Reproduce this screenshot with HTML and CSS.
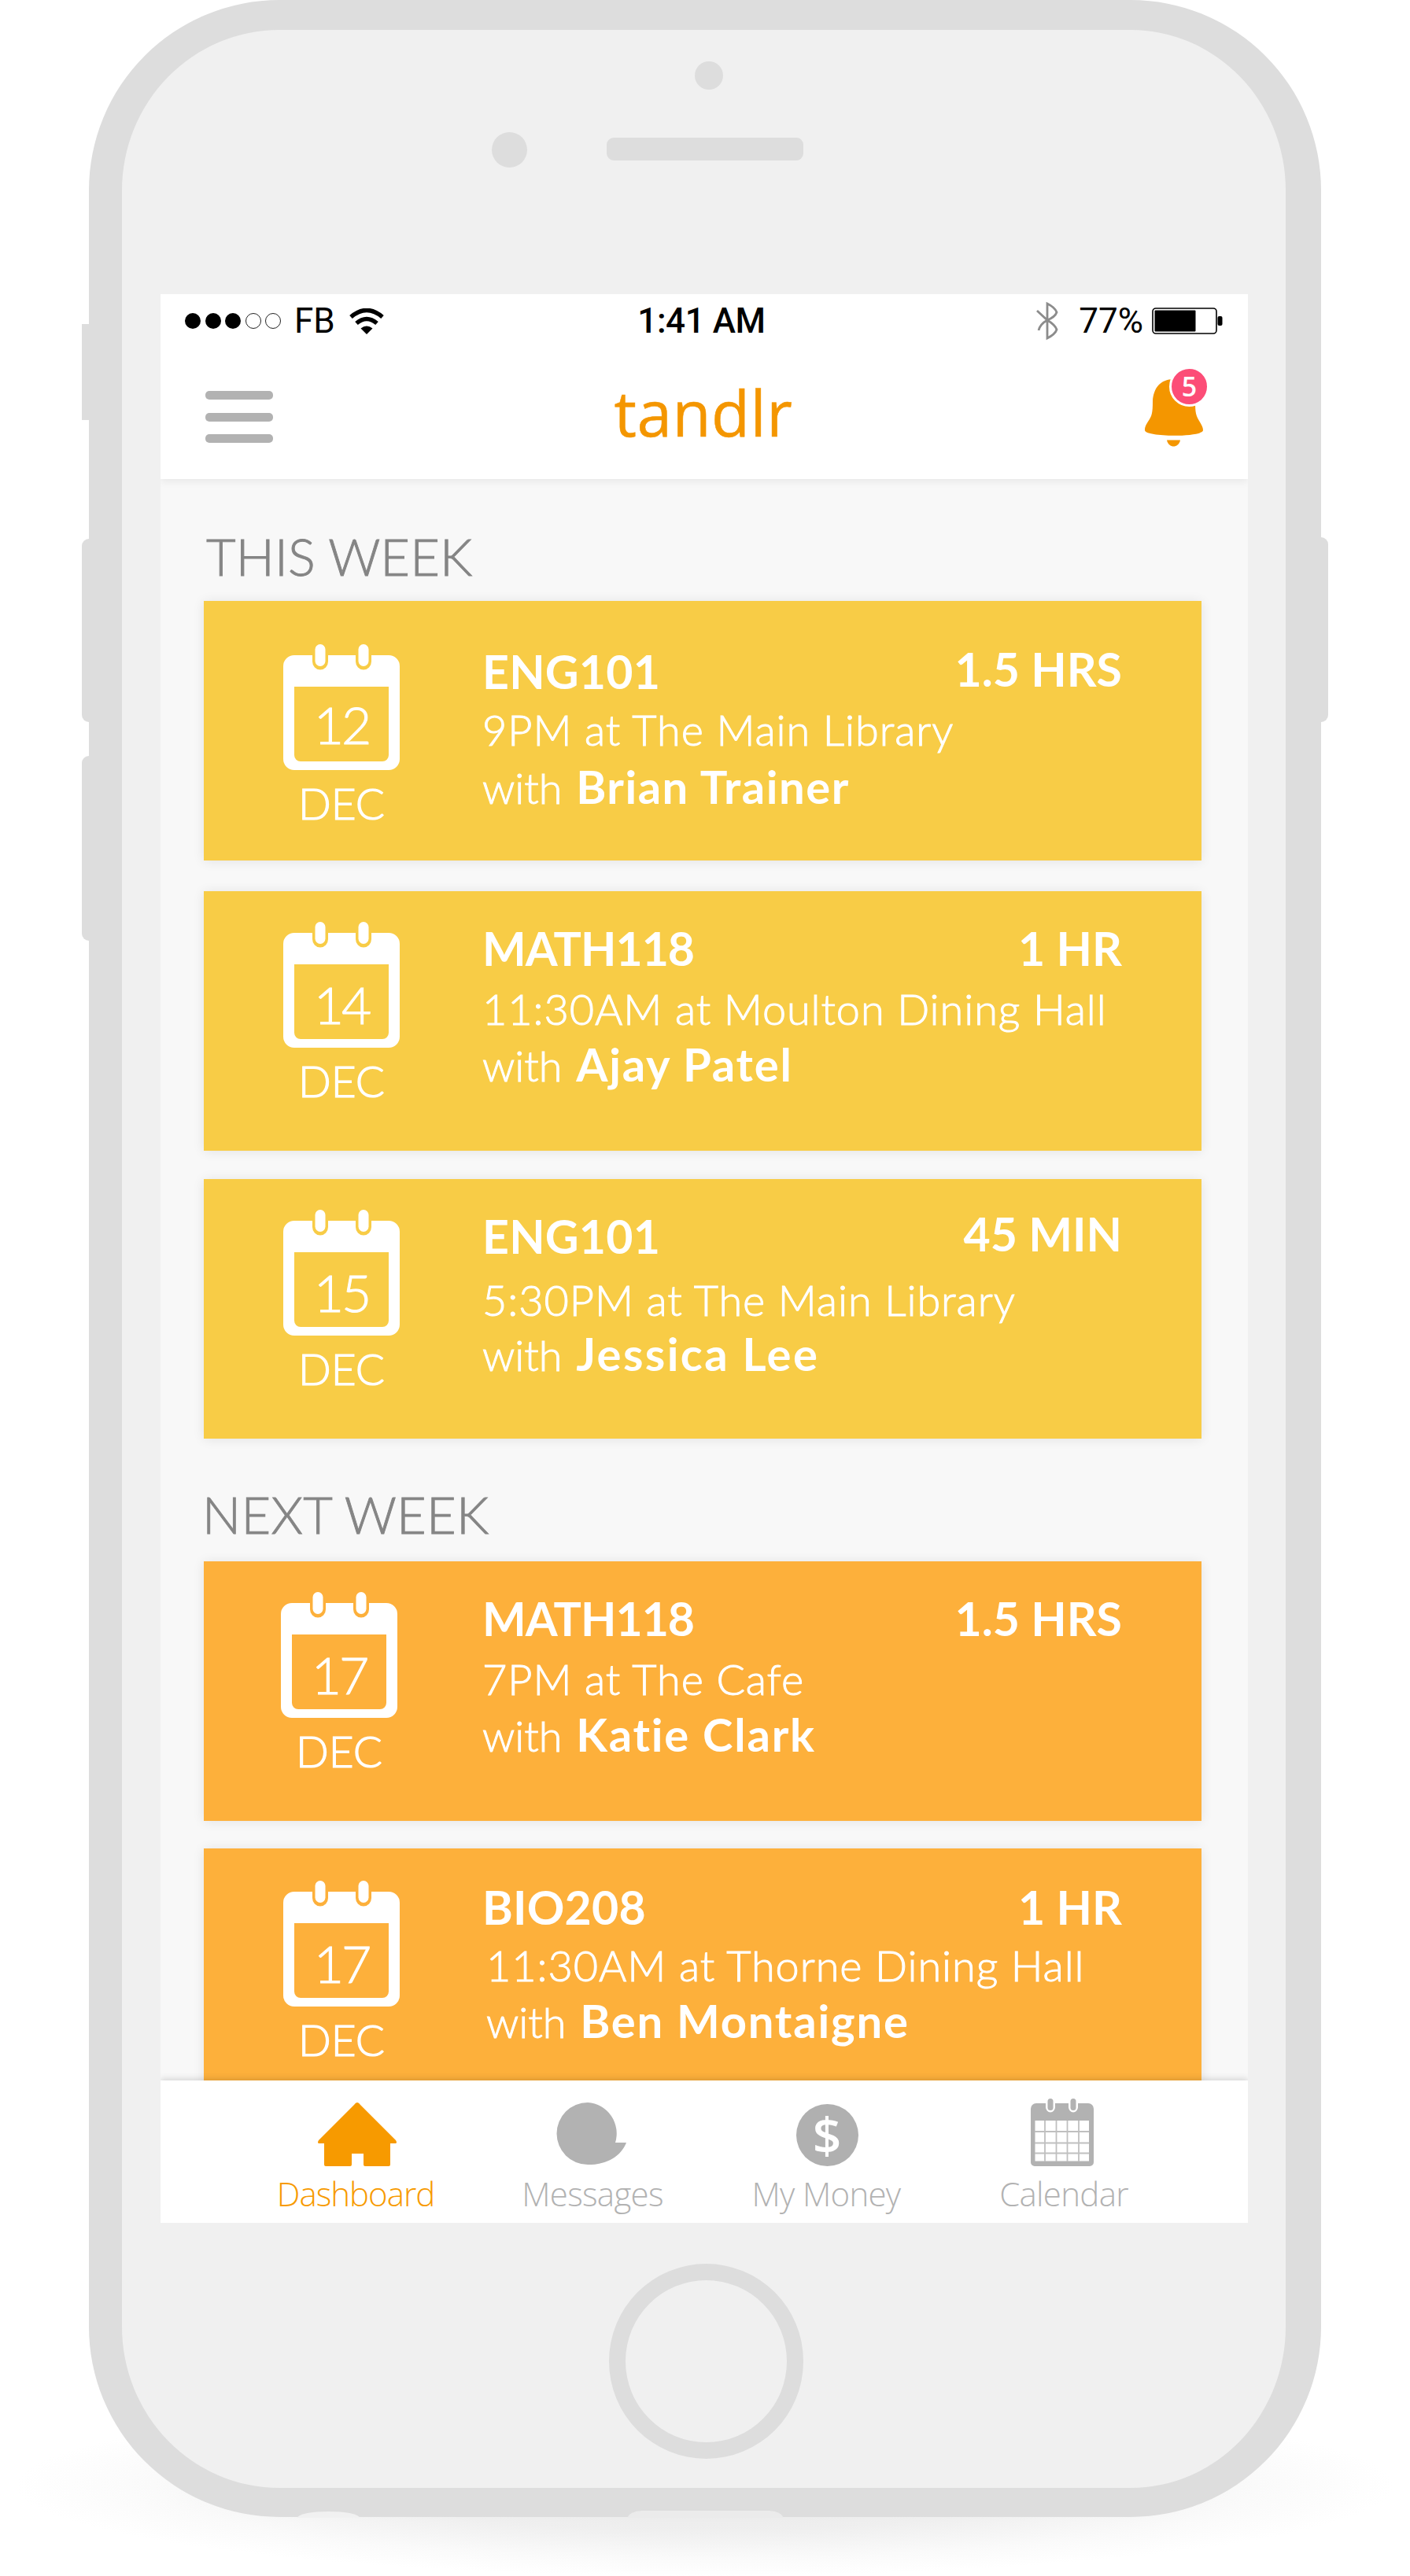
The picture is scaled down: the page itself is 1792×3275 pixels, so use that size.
FILE: index.html
```html
<!DOCTYPE html>
<html lang="en">
<head>
  <meta charset="UTF-8">
  <meta name="viewport" content="width=device-width, initial-scale=1.0">
  <title>tandlr</title>
  <link rel="stylesheet" href="styles.css">
</head>
<body>

  <!-- shapes used more than once -->
  <svg class="sprite" width="0" height="0">
    <symbol id="cal" viewBox="0 0 148 160">
      <path fill="#fff" fill-rule="evenodd" d="M14 14H37V22a10 10.500 0 0 0 20 0V14H92V22a10 10.500 0 0 0 20 0V14H134a14 14 0 0 1 14 14V146a14 14 0 0 1-14 14H14a14 14 0 0 1-14-14V28A14 14 0 0 1 14 14ZM14 54V141a8 8 0 0 0 8 8H126a8 8 0 0 0 8-8V54Z"/>
      <rect x="40.500" y="0" width="13" height="28" rx="6.500" fill="#fff"/>
      <rect x="95.500" y="0" width="13" height="28" rx="6.500" fill="#fff"/>
    </symbol>
  </svg>

  <div class="stage">
    <div class="floor-shadow"></div>
    <div class="side-button mute"></div>
    <div class="side-button vol-up"></div>
    <div class="side-button vol-down"></div>
    <div class="side-button power"></div>

    <div class="phone">
      <div class="top-bezel">
        <div class="sensor"></div>
        <div class="camera"></div>
        <div class="speaker"></div>
      </div>

      <div class="screen">
        <header class="header">
          <div class="status">
            <div class="status-left">
              <div class="signal"><i></i><i></i><i></i><i class="off"></i><i class="off"></i></div>
              <span class="carrier">FB</span>
              <svg class="wifi" width="44" height="33" viewBox="0 0 44 33">
                <path d="M2 11Q22 -6 42 11" fill="none" stroke="#000" stroke-width="5.500"/>
                <path d="M9 19Q22 8 35 19" fill="none" stroke="#000" stroke-width="5.500"/>
                <path d="M14.500 25.500Q22 19.500 29.500 25.500L22 33Z"/>
              </svg>
            </div>
            <span class="time">1:41 AM</span>
            <div class="status-right">
              <svg width="28" height="50" viewBox="0 0 28 50">
                <path d="M1 12L14 24Q24 20 26 14Q24 8 14 3V47Q24 42 26 36Q24 30 14 24Q5 29 3 37" fill="none" stroke="#8c8c8c" stroke-width="2.800"/>
              </svg>
              <span class="percent">77%</span>
              <svg width="90" height="34" viewBox="0 0 90 34">
                <rect x="1" y="1" width="81" height="32" rx="4" fill="none" stroke="#000" stroke-width="1.600"/>
                <rect x="3.500" y="3.500" width="52" height="27" rx="1"/>
                <rect x="83.500" y="11" width="6" height="12" rx="2"/>
              </svg>
            </div>
          </div>
          <div class="nav">
            <div class="menu"><i></i><i></i><i></i></div>
            <h1 class="logo">tandlr</h1>
            <div class="alerts">
              <svg width="74" height="86" viewBox="0 0 74 86">
                <path fill="#f49600" d="M37 0C19 0 11 12 10 28C10 43 9 47 4 54C1 59 0 61 0 65C0 74 74 74 74 65C74 61 72 58 69 53C65 46 64 43 64 28C63 12 55 0 37 0Z"/>
                <path fill="#f49600" d="M28 77.500H45C44 83 40 85.500 36.500 85.500C33 85.500 29 83 28 77.500Z"/>
              </svg>
              <span class="badge">5</span>
            </div>
          </div>
        </header>

        <main class="content">
          <h2 class="week">THIS WEEK</h2>

          <article class="card first">
            <div class="date"><div class="cal"><svg width="148" height="160"><use href="#cal"/></svg><span>12</span></div><p>DEC</p></div>
            <div class="details">
              <div class="row"><h3>ENG101</h3><span class="length">1.5 HRS</span></div>
              <p class="place">9PM at The Main Library</p>
              <p class="tutor">with <b>Brian Trainer</b></p>
            </div>
          </article>

          <article class="card second">
            <div class="date"><div class="cal"><svg width="148" height="160"><use href="#cal"/></svg><span>14</span></div><p>DEC</p></div>
            <div class="details">
              <div class="row"><h3 class="math">MATH118</h3><span class="length">1 HR</span></div>
              <p class="place">11:30AM at Moulton Dining Hall</p>
              <p class="tutor">with <b>Ajay Patel</b></p>
            </div>
          </article>

          <article class="card third">
            <div class="date"><div class="cal"><svg width="148" height="160"><use href="#cal"/></svg><span>15</span></div><p>DEC</p></div>
            <div class="details">
              <div class="row"><h3>ENG101</h3><span class="length">45 MIN</span></div>
              <p class="place">5:30PM at The Main Library</p>
              <p class="tutor">with <b>Jessica Lee</b></p>
            </div>
          </article>

          <h2 class="week next">NEXT WEEK</h2>

          <article class="card orange fourth">
            <div class="date"><div class="cal"><svg width="148" height="160"><use href="#cal"/></svg><span>17</span></div><p>DEC</p></div>
            <div class="details">
              <div class="row"><h3 class="math">MATH118</h3><span class="length">1.5 HRS</span></div>
              <p class="place">7PM at The Cafe</p>
              <p class="tutor">with <b>Katie Clark</b></p>
            </div>
          </article>

          <article class="card orange fifth">
            <div class="date"><div class="cal"><svg width="148" height="160"><use href="#cal"/></svg><span>17</span></div><p>DEC</p></div>
            <div class="details">
              <div class="row"><h3>BIO208</h3><span class="length">1 HR</span></div>
              <p class="place">11:30AM at Thorne Dining Hall</p>
              <p class="tutor">with <b>Ben Montaigne</b></p>
            </div>
          </article>
        </main>

        <nav class="tabs">
          <a class="tab active">
            <svg width="100" height="88" viewBox="0 0 100 88">
              <path fill="#f79a00" d="M50 6Q52 6 54 9L99 54Q101 57 99 58H92V85Q92 87 90 87H60Q58 87 58 85V71H43V85Q43 87 41 87H10Q8 87 8 85V58H1Q-1 57 1 54L46 9Q48 6 50 6Z"/>
            </svg>
            Dashboard
          </a>
          <a class="tab messages">
            <svg width="90" height="88" viewBox="0 0 90 88">
              <path fill="#b2b2b2" d="M40 6a39.500 39.500 0 0 1 35 51H89C84 70 70 85 40 85a39.500 39.500 0 0 1 0-79Z"/>
            </svg>
            Messages
          </a>
          <a class="tab money">
            <span class="coin">$</span>
            My Money
          </a>
          <a class="tab calendar">
            <svg width="80" height="88" viewBox="0 0 80 88">
              <path fill="#b2b2b2" d="M7 7H19V12a6 6.500 0 0 0 12 0V7H48V12a6 6.500 0 0 0 12 0V7H73a7 7 0 0 1 7 7V82a5 5 0 0 1-5 5H5a5 5 0 0 1-5-5V14a7 7 0 0 1 7-7Z"/>
              <rect x="21.500" y="1" width="7" height="15" rx="3.500" fill="#b2b2b2"/>
              <rect x="50.500" y="1" width="7" height="15" rx="3.500" fill="#b2b2b2"/>
              <rect x="5.500" y="29" width="68.500" height="51.500" fill="#fff"/>
              <path d="M18 29V81M32.500 29V81M46.500 29V81M61 29V81M5 43H74M5 57.500H74M5 70.500H74" stroke="#c0c0c0" stroke-width="1.800"/>
            </svg>
            Calendar
          </a>
        </nav>
      </div>

      <div class="home-button"></div>
    </div>

    <div class="port jack"></div>
    <div class="port lightning"></div>
  </div>

</body>
</html>
```

FILE: styles.css
```css
* {
  box-sizing: border-box;
}
body {
  margin: 0;
  background-color: #fff;
  font-family: Lato, sans-serif;
}
h1, h2, h3, p {
  margin: 0;
}
.sprite {
  display: block;
}
.stage {
  position: relative;
  width: 1792px;
  height: 3275px;
  padding-left: 113px;
  overflow: hidden;
}

/* phone body */
.phone {
  position: relative;
  width: 1566px;
  height: 3200px;
  border: solid #ddd;
  border-width: 38px 45px 37px 42px;
  border-radius: 242px;
  background-color: #f0f0f0;
  display: flex;
  flex-direction: column;
}
.floor-shadow {
  position: absolute;
  left: 20px;
  bottom: 0;
  width: 1752px;
  height: 230px;
  background: radial-gradient(closest-side, #e6e6e6, #efefef 50%, #fafafa 80%, #fff);
}
.side-button {
  position: absolute;
  left: 104px;
  width: 30px;
  border-radius: 9px;
  background-color: #ddd;
}
.mute {
  top: 412px;
  height: 122px;
  border-radius: 0;
}
.vol-up {
  top: 685px;
  height: 233px;
}
.vol-down {
  top: 961px;
  height: 235px;
}
.power {
  left: 1658px;
  top: 683px;
  height: 235px;
}
.top-bezel {
  position: relative;
  height: 336px;
  flex: none;
}
.sensor, .camera, .speaker {
  position: absolute;
  background-color: #ddd;
  border-radius: 50%;
}
.sensor {
  left: 728px;
  top: 40px;
  width: 36px;
  height: 36px;
}
.camera {
  left: 470px;
  top: 130px;
  width: 45px;
  height: 45px;
}
.speaker {
  left: 616px;
  top: 137px;
  width: 250px;
  height: 29px;
  border-radius: 9px;
}
.home-button {
  width: 247px;
  height: 248px;
  margin: 52px 0 0 619px;
  border: 21px solid #ddd;
  border-radius: 50%;
}
.port {
  position: absolute;
  background-color: #f1f1f1;
}
.jack {
  left: 378px;
  top: 3193px;
  width: 79px;
  height: 8px;
  border-radius: 40px 40px 0 0 / 8px 8px 0 0;
}
.lightning {
  left: 798px;
  top: 3192px;
  width: 197px;
  height: 9px;
  border-radius: 18px 18px 0 0 / 9px 9px 0 0;
  background-color: #ebebeb;
}

/* app */
.screen {
  width: 1382px;
  height: 2452px;
  flex: none;
  margin-left: 49px;
  background-color: #f8f8f8;
  display: flex;
  flex-direction: column;
  overflow: hidden;
}
.header {
  position: relative;
  z-index: 1;
  height: 235px;
  flex: none;
  background-color: #fff;
  box-shadow: 0 3px 10px rgba(0, 0, 0, 0.07);
}
.status {
  height: 68px;
  padding: 0 32px 0 31px;
  display: grid;
  grid-template-columns: 1fr auto 1fr;
  align-items: center;
  font-family: Roboto, sans-serif;
  font-size: 44px;
  line-height: 68px;
}
.status-left, .status-right {
  display: flex;
  align-items: center;
}
.status-right {
  justify-content: flex-end;
}
.signal {
  display: flex;
  gap: 5.500px;
}
.signal i {
  width: 20px;
  height: 20px;
  border-radius: 50%;
  background-color: #000;
}
.signal .off {
  background-color: transparent;
  border: 1.500px solid #222;
}
.carrier {
  margin: 0 18px 0 17px;
}
.time {
  margin-left: -6px;
  font-weight: 500;
  letter-spacing: -0.4px;
}
.percent {
  margin: 0 11px 0 26px;
}
.nav {
  padding: 0 57px;
  display: flex;
  justify-content: space-between;
  align-items: flex-start;
}
.menu {
  width: 86px;
  padding-top: 55px;
  display: flex;
  flex-direction: column;
  gap: 16.500px;
}
.menu i {
  height: 11px;
  border-radius: 5px;
  background-color: #b2b2b2;
}
.logo {
  margin: 32px 0 0 -14px;
  font-family: "Open Sans", sans-serif;
  font-weight: 400;
  font-size: 80px;
  line-height: 100px;
  letter-spacing: 0.5px;
  color: #f49600;
  -webkit-text-stroke: 0.5px #f49600;
}
.alerts {
  position: relative;
  padding-top: 40px;
}
.badge {
  position: absolute;
  left: 31px;
  top: 24px;
  width: 51px;
  height: 51px;
  border: 3.500px solid #fff;
  border-radius: 50%;
  background-color: #fc4d77;
  color: #fff;
  font-family: "Open Sans", sans-serif;
  font-weight: 600;
  font-size: 34px;
  line-height: 44px;
  text-align: center;
}

.content {
  flex: 1;
  min-height: 0;
  padding: 0 59px 0 55px;
  overflow: hidden;
}
.week {
  padding: 58px 0 17px 3px;
  font-weight: 300;
  font-size: 65px;
  line-height: 80px;
  letter-spacing: 0.1px;
  color: #858585;
  -webkit-text-stroke: 0.9px #858585;
}
.next {
  padding: 56px 0 20px 0;
  margin-left: -2px;
  letter-spacing: 0.3px;
}
.card {
  height: 330px;
  padding: 37px 101px 0 101px;
  display: flex;
  background-color: #f8cc46;
  box-shadow: 0 1px 14px rgba(0, 0, 0, 0.09);
  color: #fff;
}
.orange {
  background-color: #fdb03b;
}
.date {
  width: 148px;
  padding-top: 2px;
  text-align: center;
}
.cal {
  position: relative;
  height: 160px;
}
.cal span {
  position: absolute;
  left: 0;
  top: 65px;
  width: 148px;
  font-weight: 300;
  font-size: 66px;
  line-height: 80px;
  letter-spacing: -3px;
  -webkit-text-stroke: 1px #fff;
}
.date p {
  margin-top: 9px;
  font-size: 55px;
  line-height: 66px;
  font-weight: 300;
  -webkit-text-stroke: 1.2px #fff;
}
.details {
  flex: 1;
  padding-left: 105px;
  white-space: nowrap;
}
.row {
  display: flex;
  justify-content: space-between;
}
.row h3, .length {
  font-size: 59px;
  font-weight: 700;
  line-height: 72px;
}
.row h3 {
  letter-spacing: 0.2px;
}
.row .math {
  letter-spacing: -1px;
}
.place, .tutor {
  font-size: 54px;
  font-weight: 300;
  line-height: 72px;
  -webkit-text-stroke: 1px #fff;
}
.place {
  margin-top: 5px;
  letter-spacing: 0.95px;
}
.tutor {
  margin-top: -2px;
}
.tutor b {
  margin-left: 3px;
  font-size: 58px;
  font-weight: 700;
  letter-spacing: 1.8px;
  -webkit-text-stroke: 0;
}

/* spacing of the single cards */
.first {
  padding-top: 54px;
}
.first .date {
  padding-top: 1px;
}
.first .cal span {
  top: 62px;
}
.first .place {
  margin-top: 2px;
}
.first .tutor {
  margin-top: 0;
}
.first .tutor b {
  letter-spacing: 1.5px;
}
.first .length, .third .length {
  margin-top: -3px;
}
.second {
  margin-top: 39px;
}
.third {
  margin-top: 36px;
}
.third .place {
  margin-top: 9px;
}
.third .tutor {
  margin-top: -4px;
}
.third .tutor b {
  letter-spacing: 2.4px;
}
.fourth .date {
  margin: 0 3px 0 -3px;
}
.fifth {
  margin-top: 35px;
  padding-top: 39px;
}
.fifth .place {
  margin-top: 2px;
  padding-left: 5px;
}
.fifth .tutor {
  padding-left: 5px;
}

.tabs {
  position: relative;
  height: 181px;
  flex: none;
  padding: 22px 84px 0 98px;
  display: grid;
  grid-template-columns: repeat(4, 300px);
  background-color: #fff;
  box-shadow: 0 -2px 8px rgba(0, 0, 0, 0.15);
}
.tab {
  display: flex;
  flex-direction: column;
  align-items: center;
  gap: 4px;
  font-family: "Open Sans", sans-serif;
  font-weight: 300;
  font-size: 42px;
  line-height: 60px;
  letter-spacing: -0.7px;
  color: #b2b2b2;
}
.active {
  color: #f79a00;
  letter-spacing: -1px;
}
.active svg {
  margin-left: 4px;
}
.messages svg {
  margin-right: 3px;
}
.messages {
  padding-left: 2px;
}
.money {
  padding-right: 4px;
}
.calendar svg {
  margin-right: 5px;
}
.coin {
  width: 79px;
  height: 79px;
  margin: 8px 0 1px 2px;
  border-radius: 50%;
  background-color: #b0b0b0;
  color: #fff;
  font-weight: 600;
  font-size: 64px;
  line-height: 77px;
  letter-spacing: 0;
  text-align: center;
}
```
